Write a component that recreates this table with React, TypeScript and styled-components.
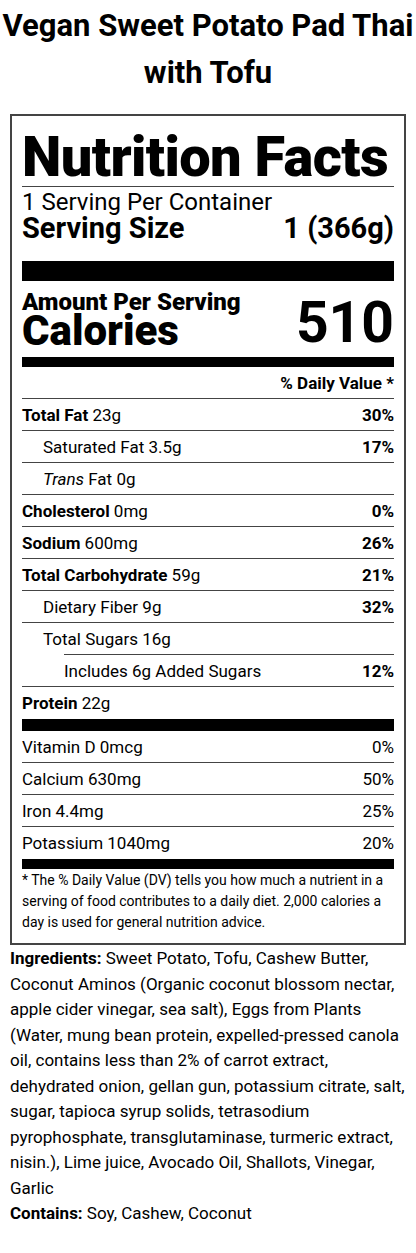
import styled, { createGlobalStyle } from "styled-components";

const GlobalStyle = createGlobalStyle`
  body {
    margin: 0;
    background: #fff;
    color: #000;
    font-family: Roboto, "Liberation Sans", Arial, sans-serif;
  }
`;

type Nutrient = {
  name: string;
  amount: string;
  dv?: string;
  bold?: boolean;
  italic?: string;
  indent?: number;
};

const nutrients: Nutrient[] = [
  { name: "Total Fat", amount: "23g", dv: "30%", bold: true },
  { name: "Saturated Fat", amount: "3.5g", dv: "17%", indent: 1 },
  { name: "Fat", amount: "0g", italic: "Trans", indent: 1 },
  { name: "Cholesterol", amount: "0mg", dv: "0%", bold: true },
  { name: "Sodium", amount: "600mg", dv: "26%", bold: true },
  { name: "Total Carbohydrate", amount: "59g", dv: "21%", bold: true },
  { name: "Dietary Fiber", amount: "9g", dv: "32%", indent: 1 },
  { name: "Total Sugars", amount: "16g", indent: 1 },
  { name: "Includes 6g Added Sugars", amount: "", dv: "12%", indent: 2 },
  { name: "Protein", amount: "22g", bold: true },
];

const vitamins = [
  { name: "Vitamin D", amount: "0mcg", dv: "0%" },
  { name: "Calcium", amount: "630mg", dv: "50%" },
  { name: "Iron", amount: "4.4mg", dv: "25%" },
  { name: "Potassium", amount: "1040mg", dv: "20%" },
];

const App = () => {
  return (
    <Page>
      <GlobalStyle />
      <Title>Vegan Sweet Potato Pad Thai with Tofu</Title>
      <Label>
        <Heading>Nutrition Facts</Heading>
        <Servings>1 Serving Per Container</Servings>
        <ServingSize>
          <span>Serving Size</span>
          <span>1 (366g)</span>
        </ServingSize>
        <Bar size={20} />
        <CaloriesRow>
          <div>
            <AmountLabel>Amount Per Serving</AmountLabel>
            <CaloriesLabel>Calories</CaloriesLabel>
          </div>
          <CaloriesValue>510</CaloriesValue>
        </CaloriesRow>
        <Bar size={10} />
        <DailyHeader>% Daily Value *</DailyHeader>
        {nutrients.map((n, i) => (
          <Row
            key={n.name}
            indent={n.indent ?? 0}
            divider={i < nutrients.length - 1}
            divIndent={nutrients[i + 1]?.indent === 2 ? 2 : 0}
          >
            <span>
              {n.italic && <em>{n.italic} </em>}
              {n.bold ? <b>{n.name}</b> : n.name}
              {n.amount && ` ${n.amount}`}
            </span>
            {n.dv && <b>{n.dv}</b>}
          </Row>
        ))}
        <Bar size={12} />
        {vitamins.map((v, i) => (
          <Row key={v.name} indent={0} divider={i < vitamins.length - 1} divIndent={0}>
            <span>
              {v.name} {v.amount}
            </span>
            <span>{v.dv}</span>
          </Row>
        ))}
        <Bar size={10} />
        <Footnote>
          * The % Daily Value (DV) tells you how much a nutrient in a serving of
          food contributes to a daily diet. 2,000 calories a day is used for
          general nutrition advice.
        </Footnote>
      </Label>
      <Ingredients>
        <b>Ingredients:</b> Sweet Potato, Tofu, Cashew Butter, Coconut Aminos
        (Organic coconut blossom nectar, apple cider vinegar, sea salt), Eggs
        from Plants (Water, mung bean protein, expelled-pressed canola oil,
        contains less than 2% of carrot extract, dehydrated onion, gellan gun,
        potassium citrate, salt, sugar, tapioca syrup solids, tetrasodium
        pyrophosphate, transglutaminase, turmeric extract, nisin.), Lime juice,
        Avocado Oil, Shallots, Vinegar, Garlic
      </Ingredients>
      <Ingredients>
        <b>Contains:</b> Soy, Cashew, Coconut
      </Ingredients>
    </Page>
  );
};

const Page = styled.div`
  padding: 0 10px 20px;
`;

const Title = styled.h1`
  margin: 0 -10px 18px;
  padding-top: 2px;
  font-size: 31px;
  line-height: 47px;
  font-weight: 700;
  text-align: center;
`;

const Label = styled.div`
  border: 2px solid #444;
  padding: 13px 10px 10px;
`;

const Heading = styled.div`
  font-size: 56px;
  font-weight: 900;
  line-height: 57px;
  letter-spacing: -0.6px;
  white-space: nowrap;
  border-bottom: 1px solid #444;
`;

const Servings = styled.div`
  font-size: 24px;
  line-height: 24px;
  margin-top: 3px;
`;

const ServingSize = styled.div`
  display: flex;
  justify-content: space-between;
  font-size: 29px;
  font-weight: 700;
  line-height: 28px;
  padding-bottom: 19px;
`;

const Bar = styled.div<{ size: number }>`
  height: ${(p) => p.size}px;
  background: #000;
`;

const CaloriesRow = styled.div`
  display: flex;
  justify-content: space-between;
  align-items: flex-end;
  padding: 9px 0 9px;
`;

const AmountLabel = styled.div`
  font-size: 24px;
  font-weight: 900;
  line-height: 24px;
`;

const CaloriesLabel = styled.div`
  font-size: 42px;
  font-weight: 900;
  line-height: 34px;
`;

const CaloriesValue = styled.div`
  font-size: 57px;
  font-weight: 700;
  line-height: 50px;
`;

const DailyHeader = styled.div`
  text-align: right;
  font-size: 17px;
  font-weight: 700;
  line-height: 30px;
  padding-top: 1px;
  border-bottom: 1px solid #444;
`;

const Row = styled.div<{ indent: number; divider: boolean; divIndent: number }>`
  display: flex;
  justify-content: space-between;
  align-items: center;
  box-sizing: border-box;
  height: 32px;
  padding: 0 0 1px ${(p) => p.indent * 21}px;
  font-size: 17px;
  position: relative;
  b {
    font-weight: 700;
  }
  em {
    font-style: italic;
  }
  &::after {
    content: "";
    display: ${(p) => (p.divider ? "block" : "none")};
    position: absolute;
    left: ${(p) => p.divIndent * 21}px;
    right: 0;
    bottom: 0;
    height: 1px;
    background: #444;
  }
`;

const Footnote = styled.p`
  margin: 1px 0 0;
  font-size: 14px;
  line-height: 21px;
`;

const Ingredients = styled.p`
  margin: 1px 0 0;
  font-size: 17px;
  line-height: 25.5px;
  & + & {
    margin-top: 0;
  }
  b {
    font-weight: 700;
  }
`;

export default App;
